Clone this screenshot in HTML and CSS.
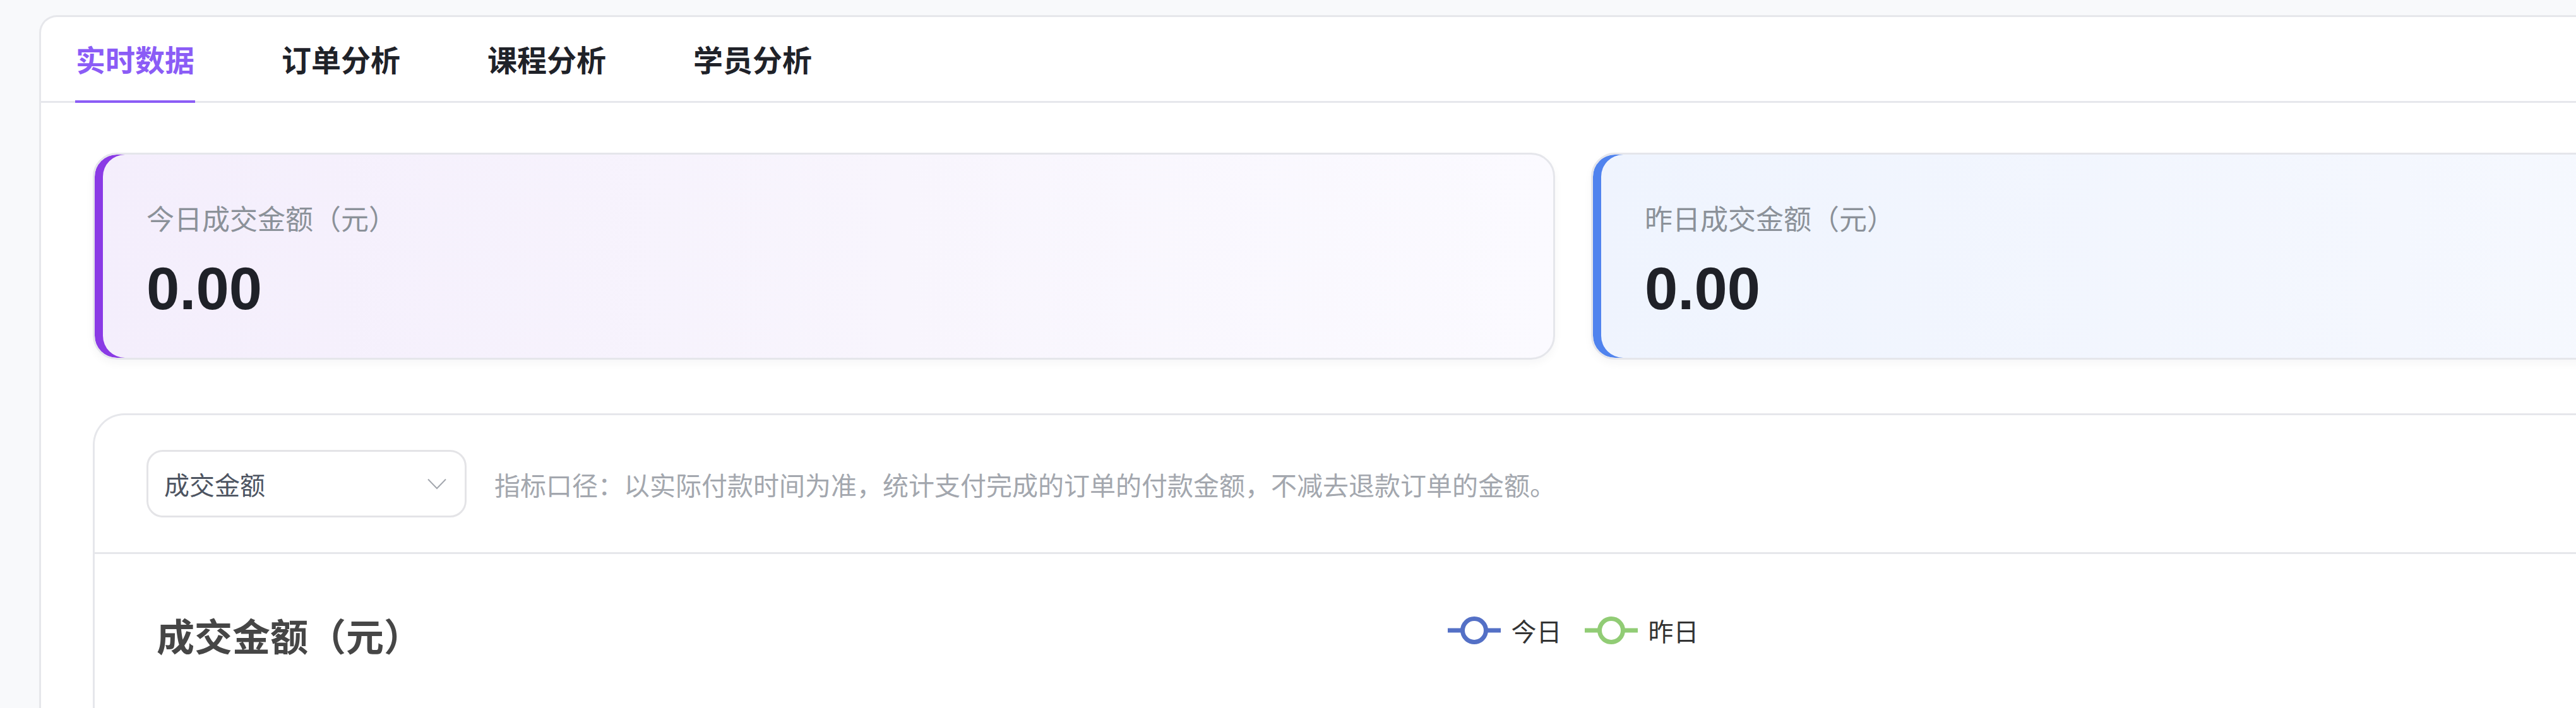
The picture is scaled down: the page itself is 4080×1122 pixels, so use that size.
FILE: index.html
```html
<!DOCTYPE html>
<html lang="zh-CN">
<head>
    <meta charset="UTF-8">
    <meta name="viewport" content="width=device-width, initial-scale=1.0">
    <title>数据统计</title>
    <link rel="stylesheet" href="styles.css">
</head>
<body>

<div class="page">
    <div class="panel">
        <nav class="tabs">
            <a class="tab active">实时数据</a>
            <a class="tab">订单分析</a>
            <a class="tab">课程分析</a>
            <a class="tab">学员分析</a>
        </nav>

        <div class="content">
            <div class="stats">
                <div class="stat stat-today">
                    <div class="stat-label">今日成交金额（元）</div>
                    <div class="stat-value">0.00</div>
                </div>
                <div class="stat stat-yesterday">
                    <div class="stat-label">昨日成交金额（元）</div>
                    <div class="stat-value">0.00</div>
                </div>
            </div>

            <div class="chart-panel">
                <div class="filter-row">
                    <div class="select">
                        <span>成交金额</span>
                        <svg class="chevron" width="30" height="18" viewBox="0 0 30 18">
                            <polyline points="1,1.5 15,16 29,1.5" fill="none" stroke="#a3a7ae" stroke-width="2"/>
                        </svg>
                    </div>
                    <p class="hint">指标口径：以实际付款时间为准，统计支付完成的订单的付款金额，不减去退款订单的金额。</p>
                </div>

                <div class="chart">
                    <div class="chart-head">
                        <h3 class="chart-title">成交金额（元）</h3>
                        <div class="legend">
                            <div class="legend-item">
                                <svg width="84" height="46" viewBox="0 0 84 46">
                                    <line x1="0" y1="23" x2="84" y2="23" stroke="#5470c6" stroke-width="7"/>
                                    <circle cx="42" cy="23" r="18.5" fill="#fff" stroke="#5470c6" stroke-width="7"/>
                                </svg>
                                <span>今日</span>
                            </div>
                            <div class="legend-item">
                                <svg width="84" height="46" viewBox="0 0 84 46">
                                    <line x1="0" y1="23" x2="84" y2="23" stroke="#91cc75" stroke-width="7"/>
                                    <circle cx="42" cy="23" r="18.5" fill="#fff" stroke="#91cc75" stroke-width="7"/>
                                </svg>
                                <span>昨日</span>
                            </div>
                        </div>
                    </div>
                    <div class="chart-body"></div>
                </div>
            </div>
        </div>
    </div>
</div>

</body>
</html>
```

FILE: styles.css
```css
/* Page */
html, body {
    overflow: hidden;
}

body {
    margin: 0;
    background: #f8f9fb;
    font-family: "Noto Sans CJK SC", "Liberation Sans", sans-serif;
    color: #1f2229;
}

.page {
    padding: 24px 0 0 62px;
}

.panel {
    width: 4853px;
    min-height: 1200px;
    background: #ffffff;
    border: 3px solid #e6e7eb;
    border-bottom: none;
    border-radius: 28px 28px 0 0;
}

/* Tabs */
.tabs {
    display: flex;
    gap: 136px;
    padding-left: 54px;
    border-bottom: 3px solid #e6e7ec;
}

.tab {
    font-size: 47px;
    line-height: 47px;
    font-weight: 600;
    color: #1f2229;
    padding: 42px 1px 43px;
    border-bottom: 4px solid transparent;
    margin-bottom: -3px;
    cursor: pointer;
}

.tab.active {
    color: #8b5cf6;
    border-bottom-color: #8b5cf6;
}

.content {
    padding: 79px 82px 0;
}

/* Stat cards */
.stats {
    display: grid;
    grid-template-columns: 1fr 1fr;
    gap: 57px;
}

.stat {
    border: 3px solid #e5e6eb;
    border-radius: 38px;
    padding: 78px 82px 62px;
}

.stat-today {
    background: linear-gradient(90deg, #f4eefc 0%, #f8f5fd 55%, #fbfaff 100%);
    box-shadow: inset 13px 0 0 #8a3ae5, 0 6px 14px rgba(15, 23, 42, 0.04);
}

.stat-yesterday {
    background: linear-gradient(90deg, #eff4fe 0%, #f4f7fe 55%, #f9fbff 100%);
    box-shadow: inset 13px 0 0 #5083ee, 0 6px 14px rgba(15, 23, 42, 0.04);
}

.stat-label {
    font-size: 44px;
    line-height: 44px;
    color: #8b9199;
    margin-bottom: 44px;
}

.stat-value {
    font-family: "Liberation Sans", Arial, sans-serif;
    font-weight: 700;
    font-size: 94px;
    line-height: 94px;
    color: #1f2128;
}

/* Chart panel */
.chart-panel {
    margin-top: 85px;
    background: #ffffff;
    border: 3px solid #e6e7eb;
    border-bottom: none;
    border-radius: 50px 50px 0 0;
}

.filter-row {
    display: flex;
    align-items: center;
    gap: 44px;
    padding: 55px 82px 55px;
    border-bottom: 3px solid #e6e7eb;
}

.select {
    box-sizing: border-box;
    width: 507px;
    height: 107px;
    border: 3px solid #e4e4e7;
    border-radius: 26px;
    padding: 0 29px 0 25px;
    display: flex;
    align-items: center;
    justify-content: space-between;
    font-size: 40px;
    color: #4d5461;
}

.chevron {
    display: block;
}

.hint {
    margin: 0;
    font-size: 41px;
    color: #a3a7ae;
}

.chart-head {
    display: grid;
    grid-template-columns: 1fr auto 1fr;
    align-items: start;
    padding-top: 97px;
}

.chart-title {
    margin: 0 0 0 98px;
    font-size: 60px;
    line-height: 62px;
    font-weight: 700;
    color: #464646;
}

.legend {
    display: flex;
    align-items: center;
    gap: 36px;
    height: 46px;
    margin-top: 1px;
}

.legend-item {
    display: flex;
    align-items: center;
    gap: 17px;
    font-size: 40px;
    line-height: 46px;
    color: #333333;
}

.legend-item svg {
    display: block;
}

.chart-body {
    height: 400px;
}
```
